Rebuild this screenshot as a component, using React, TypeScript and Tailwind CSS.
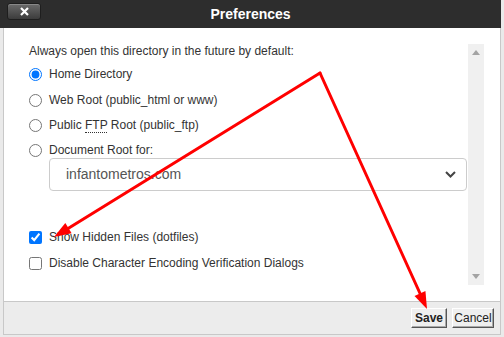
import React from "react";

const FONT = { fontFamily: '"Liberation Sans", Arial, sans-serif' };

type Pt = [number, number];

// filled arrowhead polygon for a line ending at `to`
function headPoints(from: Pt, to: Pt, len = 17, half = 6) {
  const dx = to[0] - from[0];
  const dy = to[1] - from[1];
  const d = Math.hypot(dx, dy);
  const ux = dx / d;
  const uy = dy / d;
  const bx = to[0] - ux * len;
  const by = to[1] - uy * len;
  const p1 = [bx - uy * half, by + ux * half];
  const p2 = [bx + uy * half, by - ux * half];
  return `${to[0]},${to[1]} ${p1[0]},${p1[1]} ${p2[0]},${p2[1]}`;
}

function Arrows() {
  const start: Pt = [320, 73];
  const a: Pt = [54, 237];
  const b: Pt = [427, 309];
  return (
    <svg className="absolute inset-0 pointer-events-none" width="504" height="337">
      <line x1={start[0]} y1={start[1]} x2={a[0] + 10} y2={a[1] - 6} stroke="#ff0000" strokeWidth="3" strokeLinecap="round" />
      <polygon points={headPoints(start, a)} fill="#ff0000" />
      <line x1={start[0]} y1={start[1]} x2={b[0] - 4} y2={b[1] - 9} stroke="#ff0000" strokeWidth="3" strokeLinecap="round" />
      <polygon points={headPoints(start, b)} fill="#ff0000" />
    </svg>
  );
}

function Radio({ label, checked }: { label: React.ReactNode; checked?: boolean }) {
  return (
    <label className="flex items-center h-[16px]">
      <input type="radio" name="dir" defaultChecked={checked} className="w-[13px] h-[13px] m-0 accent-[#0075ff]" />
      <span className="ml-[7px] text-[12px] text-[#333] leading-none">{label}</span>
    </label>
  );
}

function Check({ label, checked }: { label: string; checked?: boolean }) {
  return (
    <label className="flex items-center h-[16px]">
      <input type="checkbox" defaultChecked={checked} className="w-[13px] h-[13px] m-0 accent-[#0075ff]" />
      <span className="ml-[7px] text-[12px] text-[#333] leading-none">{label}</span>
    </label>
  );
}

export default function App() {
  return (
    <div className="relative w-[504px] h-[337px] overflow-hidden bg-[#eaeaea]" style={FONT}>
      <div className="w-[501px] h-[335px] flex flex-col">
        {/* Title bar */}
        <div className="h-[28px] bg-[#2d2d2d] grid grid-cols-[1fr_auto_1fr] shrink-0">
          <div className="pl-[7px] pt-[3px]">
            <button className="w-[34px] h-[17px] rounded-[3px] border border-[#1e1e1e] bg-gradient-to-b from-[#6c6c6c] to-[#3c3c3c] flex items-center justify-center shadow-[inset_0_1px_0_#888]">
              <svg width="9" height="9" viewBox="0 0 9 9">
                <path d="M1 1 L8 8 M8 1 L1 8" stroke="#fff" strokeWidth="2.2" />
              </svg>
            </button>
          </div>
          <div className="text-white font-bold text-[14px] flex items-center pt-[1px]">Preferences</div>
          <div />
        </div>

        {/* Body */}
        <div className="flex-1 ml-[3px] bg-white border-l border-r border-[#c8c8c8] flex">
          <div className="flex-1 pl-[25px] pr-[1px] pt-[15px] flex flex-col">
            <div className="h-[16px] flex items-center text-[12px] text-[#333]">
              Always open this directory in the future by default:
            </div>
            <div className="mt-[7px]">
              <Radio label="Home Directory" checked />
            </div>
            <div className="mt-[10px]">
              <Radio label="Web Root (public_html or www)" />
            </div>
            <div className="mt-[9px]">
              <Radio
                label={
                  <>
                    Public <abbr title="File Transfer Protocol" className="no-underline border-b border-dotted border-[#333]">FTP</abbr> Root (public_ftp)
                  </>
                }
              />
            </div>
            <div className="mt-[9px]">
              <Radio label="Document Root for:" />
            </div>
            <div className="ml-[20px] h-[33px] border border-[#cccccc] rounded-[4px] flex items-center justify-between pl-[16px] pr-[10px]">
              <span className="text-[14px] text-[#555]">infantometros.com</span>
              <svg width="11" height="7" viewBox="0 0 11 7">
                <path d="M1 1 L5.5 5.5 L10 1" stroke="#444" strokeWidth="2" fill="none" />
              </svg>
            </div>
            <div className="mt-[38px]">
              <Check label="Show Hidden Files (dotfiles)" checked />
            </div>
            <div className="mt-[10px]">
              <Check label="Disable Character Encoding Verification Dialogs" />
            </div>
          </div>
          {/* Scrollbar */}
          <div className="w-[16px] mr-[16px] mt-[16px] h-[241px] bg-[#f0f0f0] flex flex-col items-center justify-between py-[6px]">
            <svg width="8" height="5" viewBox="0 0 8 5">
              <path d="M0 5 L4 0 L8 5 Z" fill="#a3a3a3" />
            </svg>
            <svg width="8" height="5" viewBox="0 0 8 5">
              <path d="M0 0 L8 0 L4 5 Z" fill="#a3a3a3" />
            </svg>
          </div>
        </div>

        {/* Footer */}
        <div className="h-[34px] ml-[3px] bg-[#ececec] border-t border-b border-l border-r border-[#c8c8c8] flex items-center justify-end gap-[5px] pr-[6px] shrink-0">
          <button className="w-[36px] h-[20px] bg-[#efefef] text-[12px] font-bold text-[#222] border border-t-white border-l-white border-r-[#555] border-b-[#555] shadow-[inset_-1px_-1px_0_#a8a8a8] leading-none">
            Save
          </button>
          <button className="w-[42px] h-[20px] bg-[#efefef] text-[12px] text-[#222] border border-t-white border-l-white border-r-[#555] border-b-[#555] shadow-[inset_-1px_-1px_0_#a8a8a8] leading-none">
            Cancel
          </button>
        </div>
      </div>
      <Arrows />
    </div>
  );
}
